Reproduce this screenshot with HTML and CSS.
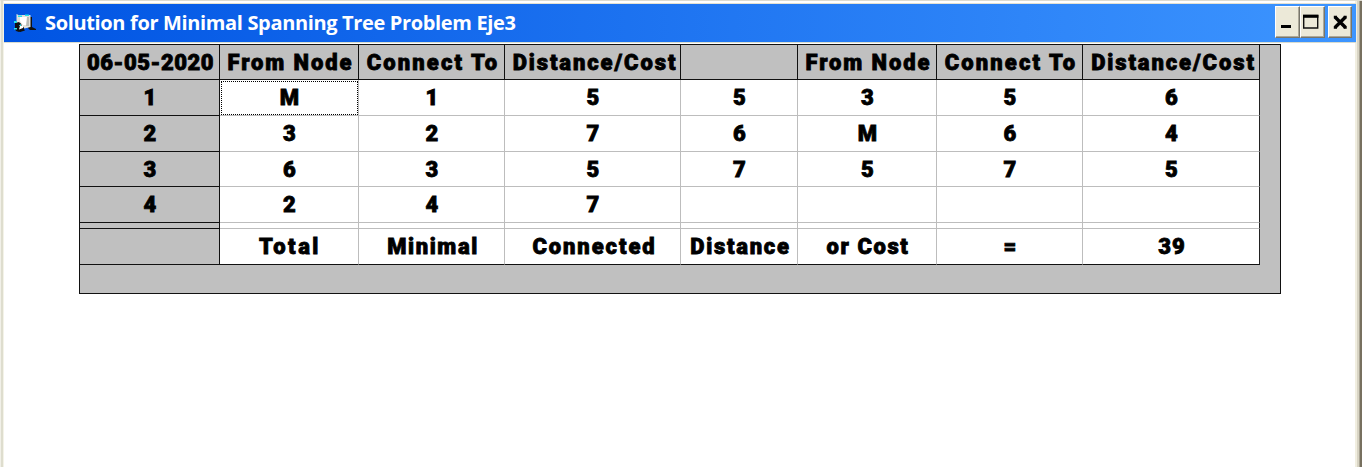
FILE: index.html
```
<!DOCTYPE html>
<html lang="en">
<head>
<meta charset="utf-8">
<title>Solution for Minimal Spanning Tree Problem Eje3</title>
<link rel="stylesheet" href="styles.css">
</head>
<body>
<div class="window">
  <header class="titlebar">
    <svg class="app-icon" width="23" height="20" viewBox="0 0 23 20">
      <path fill="#111" d="M15 4h3v10l4 2v1h-6l-2-2zM1 9l3-2 6 7v3l-5 2-3-1-1-2z"/>
      <path fill="#e2e2da" d="M2.500 1l2 1h12v12l-6 1.500-4-5-4-1z"/>
      <path fill="#fff" d="M6 4h8v8H9L6 8zM6 13l3-1v3l-4 1.500z"/>
      <path fill="#b9bab4" d="M13 4h2v9h-3z"/>
      <path fill="#25e0e8" d="M4 2.500h4V4H4zM11 1.500h4V3h-4zM0 8h3v2H0zM0 15h3v1.500H0zM5 11h2v2H5z"/>
      <path fill="#111" d="M2 10l3-1 2 2-2 1.500H3zM5 17l5-1 1 1.500-5 1.500z"/>
    </svg>
    <h1 class="caption">Solution for Minimal Spanning Tree Problem Eje3</h1>
    <div class="controls">
      <button class="control" aria-label="Minimize"><svg width="22" height="30" viewBox="0 0 22 30"><path fill="#000" d="M5 18h10v3H5z"/></svg></button>
      <button class="control" aria-label="Maximize"><svg width="22" height="30" viewBox="0 0 22 30"><path fill="none" stroke="#111" stroke-width="1.400" d="M2.700 8.500h14v12.500h-14z"/><path fill="#000" d="M2 7.800h15.400v3H2z"/></svg></button>
      <button class="control close" aria-label="Close"><svg width="22" height="30" viewBox="0 0 22 30"><path fill="none" stroke="#000" stroke-width="3.400" d="M6 10l10.500 10.500M16.500 10L6 20.500"/><path fill="#000" d="M4.800 8.800h3v2.500h-3zM14.700 8.800h3v2.500h-3zM4.800 19.200h3v2.500h-3zM14.700 19.200h3v2.500h-3z"/></svg></button>
    </div>
  </header>
  <main class="client">
    <div class="grid-frame">
      <div class="grid">
        <div class="cell head date">06-05-2020</div><div class="cell head from">From Node</div><div class="cell head connect">Connect To</div><div class="cell head cost">Distance/Cost</div><div class="cell head"></div><div class="cell head from">From Node</div><div class="cell head connect">Connect To</div><div class="cell head cost">Distance/Cost</div>
        <div class="cell head">1</div><div class="cell focus">M</div><div class="cell">1</div><div class="cell">5</div><div class="cell">5</div><div class="cell">3</div><div class="cell">5</div><div class="cell last">6</div>
        <div class="cell head">2</div><div class="cell">3</div><div class="cell">2</div><div class="cell">7</div><div class="cell">6</div><div class="cell">M</div><div class="cell">6</div><div class="cell last">4</div>
        <div class="cell head">3</div><div class="cell">6</div><div class="cell">3</div><div class="cell">5</div><div class="cell">7</div><div class="cell">5</div><div class="cell">7</div><div class="cell last">5</div>
        <div class="cell head">4</div><div class="cell">2</div><div class="cell">4</div><div class="cell">7</div><div class="cell"></div><div class="cell"></div><div class="cell"></div><div class="cell last"></div>
        <div class="cell head"></div><div class="cell"></div><div class="cell"></div><div class="cell"></div><div class="cell"></div><div class="cell"></div><div class="cell"></div><div class="cell last"></div>
        <div class="cell head"></div><div class="cell foot total">Total</div><div class="cell foot minimal">Minimal</div><div class="cell foot connected">Connected</div><div class="cell foot distance">Distance</div><div class="cell foot orcost">or Cost</div><div class="cell foot">=</div><div class="cell foot last">39</div>
      </div>
    </div>
  </main>
</div>
</body>
</html>
```
FILE: styles.css
```
* { box-sizing: border-box; }
body { margin: 0; background: #fff; overflow: hidden; }
.window {
  height: 467px;
  padding-top: 3px;
  border-left: 1px solid #f1f0e8;
  background: linear-gradient(90deg, #deddce 0 2px, #f4f3e8 2px 3px, #fff 3px 1354px, #f1eee0 1354px 1356px, #d8d4c4 1356px 1358px, #aaa594 1358px 1359px, #77705f 1359px);
  border-top: 1px solid #dedbd0;
}
.titlebar {
  display: flex;
  align-items: center;
  width: 1352px;
  height: 38px;
  margin-left: 3px;
  padding-left: 10px;
  background: linear-gradient(90deg, #0054e3, #3d95ff);
  box-shadow: 0 -1px #e4e1d2, 0 1px #d9dccf;
}
.app-icon { margin: 0 8px 0 0; }
.caption {
  flex: 1;
  margin: 0;
  color: #fff;
  font: 700 20px/36px "Open Sans", sans-serif;
  letter-spacing: -0.35px;
  white-space: nowrap;
}
.controls { display: flex; margin: -2px 4px 0 0; }
.control {
  width: 25px;
  height: 32px;
  padding: 0;
  border: 1px solid;
  border-color: #fff #77756b #77756b #fff;
  background: #ece9d8;
  box-shadow: inset -1px -1px #aca899;
}
.control svg { display: block; }
.close { width: 24px; margin-left: 3px; }
.client { padding: 2px 0 0 78px; }
.grid-frame {
  width: 1202px;
  height: 250px;
  border: 1px solid #111;
  background: #c0c0c0;
}
.grid {
  display: grid;
  grid-template-columns: 140px 139px 146px 176px 117px 139px 146px 177px;
  grid-template-rows: 35px 36px 36px 35px 36px 6px 36px;
}
.cell {
  display: flex;
  align-items: center;
  justify-content: center;
  min-width: 0;
  padding: 1px 0 0 2px;
  border-right: 1px solid #bdbdbd;
  border-bottom: 1px solid #bdbdbd;
  background: #fff;
  color: #000;
  font: 900 22px/1 Roboto, sans-serif;
  letter-spacing: 1px;
  -webkit-text-stroke: 0.8px #000;
  white-space: nowrap;
}
.head { border-color: #111; background: #c0c0c0; }
.foot { border-bottom-color: #111; }
.last { border-right-color: #222; }
.focus { outline: 1px dotted #000; outline-offset: -2px; }
.date { letter-spacing: 0.5px; }
.from { padding-left: 3px; letter-spacing: 1.9px; }
.connect { padding-left: 3px; letter-spacing: 2.1px; }
.cost { padding-left: 5px; letter-spacing: 1.9px; }
.total { letter-spacing: 2.5px; }
.minimal { padding-left: 3px; letter-spacing: 1.6px; }
.connected { padding-left: 4px; letter-spacing: 1.9px; }
.distance { padding-left: 3px; letter-spacing: 1.7px; }
.orcost { letter-spacing: 1.6px; }
```
